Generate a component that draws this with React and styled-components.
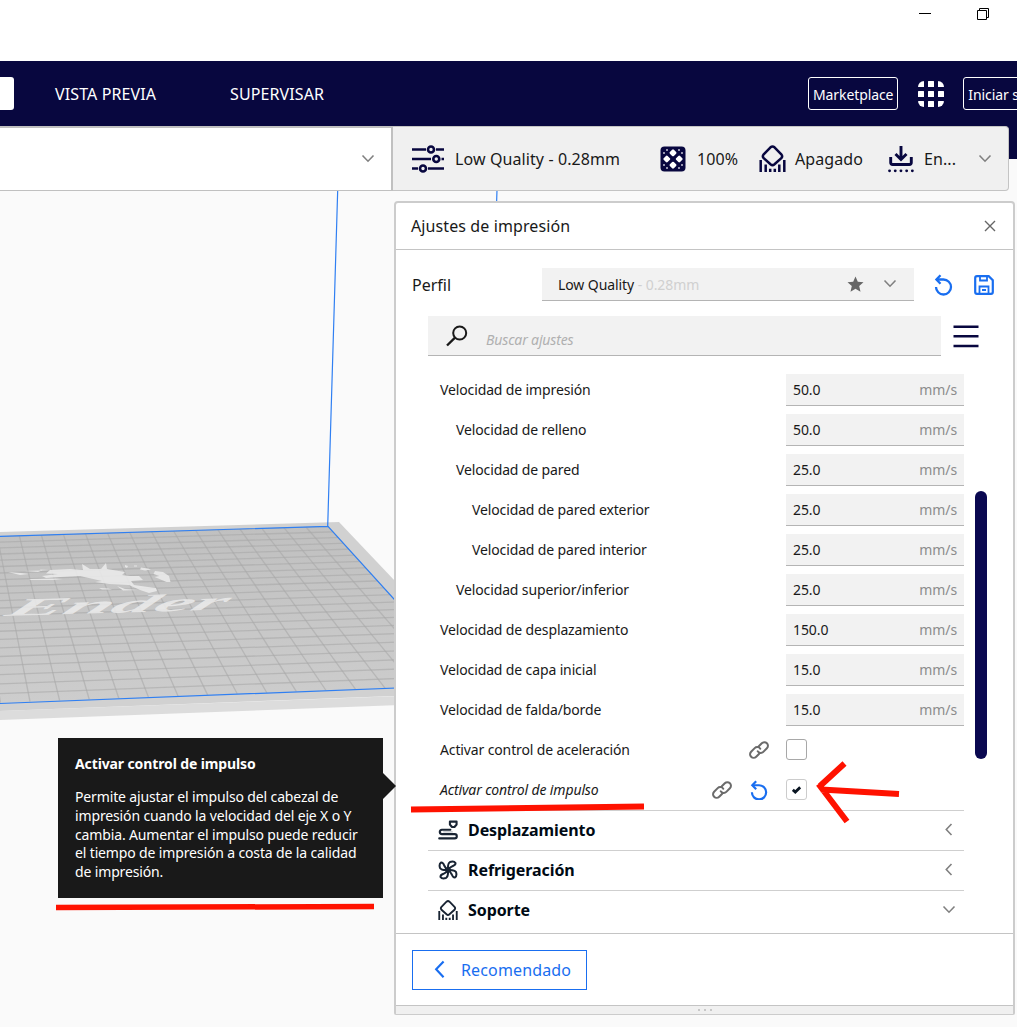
import React from "react";
import styled, { createGlobalStyle } from "styled-components";

const NAVY = "#08073f";
const BLUE = "#196ef0";

const speeds = [
  { label: "Velocidad de impresión", value: "50.0", depth: 0 },
  { label: "Velocidad de relleno", value: "50.0", depth: 1 },
  { label: "Velocidad de pared", value: "25.0", depth: 1 },
  { label: "Velocidad de pared exterior", value: "25.0", depth: 2 },
  { label: "Velocidad de pared interior", value: "25.0", depth: 2 },
  { label: "Velocidad superior/inferior", value: "25.0", depth: 1 },
  { label: "Velocidad de desplazamiento", value: "150.0", depth: 0 },
  { label: "Velocidad de capa inicial", value: "15.0", depth: 0 },
  { label: "Velocidad de falda/borde", value: "15.0", depth: 0 },
];

const GlobalStyle = createGlobalStyle`
  * {
    box-sizing: border-box;
  }
  body {
    margin: 0;
    overflow: hidden;
    background: #fafafa;
    color: #191919;
    font-family: "Noto Sans", sans-serif;
  }
  svg {
    display: block;
    flex-shrink: 0;
  }
`;

function Chevron({ dir = "down", size = 14, color = "#808080", width = 1.6 }) {
  const points = dir === "down" ? "1.5,3.5 7,9.2 12.5,3.5" : "9.5,1 4.3,6.500 9.5,12";
  return (
    <svg width={size} height={size} viewBox="0 0 14 14">
      <polyline points={points} fill="none" stroke={color} strokeWidth={width} />
    </svg>
  );
}

function SlidersIcon() {
  return (
    <svg width="34" height="28" viewBox="0 0 34 28" fill="none" stroke={NAVY} strokeWidth="2.6">
      <path d="M1 4.5h14M25 4.5h8M1 14h19M30.500 14h2.500M1 23.500h6M17 23.500h16" />
      <circle cx="20" cy="4.500" r="3" />
      <circle cx="25.300" cy="14" r="3" />
      <circle cx="12" cy="23.500" r="3" />
    </svg>
  );
}

function InfillIcon() {
  const holes = [[13, 6.8], [6.8, 13], [19.2, 13], [13, 19.2]];
  const dots = [[7, 4], [19, 4], [4, 7], [22, 7], [4, 19], [22, 19], [7, 22], [19, 22]];
  return (
    <svg width="26" height="26" viewBox="0 0 26 26">
      <rect x="0.500" y="0.500" width="25" height="25" rx="4" fill={NAVY} />
      {holes.map(([x, y]) => (
        <rect key={`${x}-${y}`} x={x - 2.800} y={y - 2.800} width="5.600" height="5.600" rx="1.200" fill="#fff" transform={`rotate(45 ${x} ${y})`} />
      ))}
      {dots.map(([x, y]) => (
        <circle key={`${x}-${y}`} cx={x} cy={y} r="1" fill="#c4c4d4" />
      ))}
    </svg>
  );
}

function SupportIcon({ size = 27, color = NAVY }) {
  return (
    <svg width={size} height={size} viewBox="0 0 27 27" fill="none" stroke={color} strokeWidth="2.5">
      <path d="M11.500 2.300 Q13.500 .6 15.500 2.300 L22.300 9.300 Q24 11.300 22.300 13.200 L15.500 19.300 Q13.500 21 11.500 19.300 L4.700 13.200 Q3 11.300 4.700 9.300 Z" />
      <path d="M1.700 15v12M25.300 15v12M6.700 19.500v7.500M20.300 19.500v7.500M11.200 23.800v3.200M15.800 23.800v3.200" />
    </svg>
  );
}

function AdhesionIcon() {
  return (
    <svg width="26" height="28" viewBox="0 0 26 28" fill="none" stroke={NAVY} strokeWidth="2.900">
      <path d="M13 1v13M7.500 9l5.500 5.500L18.500 9" />
      <path d="M2.700 12v5.500q0 2 2 2h16.600q2 0 2-2V12" />
      <path d="M1.500 25.800h24" strokeWidth="2.800" strokeDasharray="0.100 5.600" strokeLinecap="round" />
    </svg>
  );
}

function LinkIcon() {
  return (
    <svg width="20" height="20" viewBox="0 0 20 20" fill="none" stroke="#6b6b6b" strokeWidth="2" strokeLinecap="round">
      <path d="M9.800 6.200l3-3a3.600 3.600 0 0 1 5.100 5.100l-3.600 3.600a3.600 3.600 0 0 1-5.600-.6" />
      <path d="M10.200 13.800l-3 3a3.600 3.600 0 0 1-5.100-5.100l3.600-3.600a3.600 3.600 0 0 1 5.600.6" />
    </svg>
  );
}

function ResetIcon({ size = 20 }) {
  return (
    <svg width={size} height={size * 1.1} viewBox="0 0 20 22" fill="none" stroke={BLUE} strokeWidth="2.300">
      <path d="M2.500 5.500h7a7.500 7.500 0 1 1-7.500 7.500" />
      <path d="M6.500 1.200L2.400 5.500 6.500 9.800" />
    </svg>
  );
}

function SaveIcon() {
  return (
    <svg width="20" height="20" viewBox="0 0 20 20" fill="none" stroke={BLUE} strokeWidth="2.200">
      <path d="M3 1.200h11.700l4.100 4.100V17q0 1.800-1.800 1.800H3q-1.800 0-1.800-1.800V3Q1.200 1.200 3 1.200z" />
      <path d="M6 1v4.500h7V1M5.500 19v-7.500h9V19M8 15h4" strokeWidth="1.800" />
    </svg>
  );
}

function TravelIcon() {
  return (
    <svg width="20" height="20" viewBox="0 0 21 20" fill="none" stroke="#192433" strokeWidth="2.200" strokeLinejoin="round">
      <path d="M12.500 1.200h7v3L17.300 6.800h-2.600L12.500 4.200z" />
      <path d="M13 9.700H4.200a2.300 2.300 0 0 0-2.300 2.700q.3 1.900 2.300 1.900h13.300a2.200 2.200 0 0 1 0 4.500H1.300" strokeLinecap="round" />
      <path d="M5.500 12h10" strokeWidth="0.800" stroke="#9097a0" />
    </svg>
  );
}

function FanIcon() {
  return (
    <svg width="20" height="20" viewBox="0 0 20 20" fill="none" stroke="#192433" strokeWidth="2" strokeLinejoin="round">
      {[0, 90, 180, 270].map((angle) => (
        <path key={angle} transform={`rotate(${angle} 10 10)`} d="M10 10Q9.500 3.500 12 2Q16 .8 17.500 3Q17.800 5 14.500 6.200Q11.500 7.500 10 10z" />
      ))}
      <circle cx="10" cy="10" r="2.800" fill="#192433" stroke="none" />
    </svg>
  );
}

// Build plate seen from the front left; 10 mm grid
const columns = Array.from({ length: 24 }, (_, i) => i);
const rows = Array.from({ length: 22 }, (_, i) => i);

function BuildPlate() {
  return (
    <svg width="620" height="868" viewBox="0 159 620 868">
      <defs>
        <linearGradient id="bed" x1="0" y1="0" x2="0" y2="1">
          <stop offset="0" stopColor="#c0c0c0" />
          <stop offset="1" stopColor="#cdcdcd" />
        </linearGradient>
        <clipPath id="bedClip">
          <polygon points="0,536.3 328,526.3 472,685 0,703.5" />
        </clipPath>
      </defs>
      <polygon points="0,711 0,720 480,702 480,693" fill="#dcdcdc" />
      <polygon points="0,532 339,522 395,581 500,692 0,711" fill="#d1d1d1" />
      <polygon points="0,536.3 328,526.3 472,685 0,703.5" fill="url(#bed)" />
      <g clipPath="url(#bedClip)" stroke="#a8a8a8" strokeOpacity="0.6" strokeWidth="1.3">
        {columns.map((i) => (
          <line key={i} x1={328 - 22.05 * i} y1={526.3 + 0.67 * i} x2={474 - 29.6 * i} y2={685 + 1.1 * i} />
        ))}
        {rows.map((k) => {
          const y = 536.3 + (5.7 * k) / (1 - 0.0114 * k);
          const slope = 0.0305 + (0.008 * (y - 536)) / 167;
          return <line key={k} x1="0" y1={y} x2="480" y2={y - 480 * slope} />;
        })}
      </g>
      <g fill="#ececec" fillOpacity="0.85">
        <path d="M50 570l20-1 13 1-1-6 8 5 11 0 5-6 1 6 18 3-3 3 8 1 9 0 4 4-12 1 3 4 14 2 8 1 1 3-8 2-9-3-11-5-20-1-14-2 7-1-22-5-20 1-14 1-4-2 16-2-12-.5z" />
        <path d="M8 572l13 1 8 1-9 1zM24 571l18-.5-4 1.500zM29 579l26-.5 8 .5-10 1-22 0zM99 588l9 .5 4 1-10 0zM117 586l8 3 14 1-16 .5zM40 569.500l9 .5-8 .5z" />
        <path d="M125 565l3 1-1 2-2-1zM134 565.500l3 0 0 1-3 0zM141 567.500l7 1 3 1-6 1-5-1zM155 571l8 1 6 4 1.500 6-4 0-7-3-5-2 5-1-6-2z" />
        <text transform="matrix(1.85 -0.055 -0.9 1 3 616)" fontFamily="Liberation Serif, serif" fontStyle="italic" fontWeight="bold" fontSize="25" textLength="118" lengthAdjust="spacingAndGlyphs">
          Ender
        </text>
      </g>
      <g fill="none" stroke="#2f7ff2" strokeWidth="1.200">
        <path d="M0 536.300L328 526.300L472 685L0 703.500M327.700 526.300L337.700 190M497 190L496 220" />
      </g>
    </svg>
  );
}

export default function App() {
  return (
    <Window>
      <GlobalStyle />
      <TitleBar>
        <svg width="12" height="12" viewBox="0 0 12 12">
          <path d="M0 5.500h12" stroke="#000" />
        </svg>
        <svg width="12" height="12" viewBox="0 0 12 12" fill="none" stroke="#000">
          <path d="M.5 2.500h9v9h-9zM2.500 2.500v-2h9v9h-2" />
        </svg>
      </TitleBar>

      <NavBar>
        <ActiveStage />
        <Stage $width={175}>VISTA PREVIA</Stage>
        <Stage $width={578}>SUPERVISAR</Stage>
        <NavButton>Marketplace</NavButton>
        <AppsGrid width="26" height="26" viewBox="0 0 26 26">
          <clipPath id="apps">
            <rect width="26" height="26" rx="6" />
          </clipPath>
          <g fill="#fff" clipPath="url(#apps)">
            {[0, 10, 20].map((x) => [0, 10, 20].map((y) => (
              <rect key={`${x}-${y}`} x={x} y={y} width="6" height="6" rx="0.5" />
            )))}
          </g>
        </AppsGrid>
        <NavButton>Iniciar sesión</NavButton>
      </NavBar>

      <Workspace>
        <Scene>
          <BuildPlate />
        </Scene>
        <Foreground>
          <StageMenu>
            <MachineSelector>
              <Chevron />
            </MachineSelector>
            <PrintSetup>
              <SlidersIcon />
              <SetupText $width={215}>Low Quality - 0.28mm</SetupText>
              <InfillIcon />
              <SetupText $width={73} $gap={11}>100%</SetupText>
              <SupportIcon />
              <SetupText $width={102} $gap={9}>Apagado</SetupText>
              <AdhesionIcon />
              <SetupText $width={64}>En...</SetupText>
              <Chevron />
            </PrintSetup>
          </StageMenu>

          <Panel>
            <PanelHeader>
              Ajustes de impresión
              <svg width="12" height="12" viewBox="0 0 12 12" stroke="#666" strokeWidth="1.400">
                <path d="M1 1l10 10M11 1L1 11" />
              </svg>
            </PanelHeader>
            <ProfileRow>
              <ProfileLabel>Perfil</ProfileLabel>
              <ProfileSelect>
                <span>Low Quality <i>- 0.28mm</i></span>
                <svg width="18" height="18" viewBox="0 0 18 18">
                  <path d="M9.500 1.500l2.300 5.300 5.700.5-4.300 3.800 1.300 5.700-5-3-5 3 1.300-5.700L1.500 7.300l5.700-.5z" fill="#666" />
                </svg>
                <Chevron />
              </ProfileSelect>
              <ResetIcon />
              <SaveIcon />
            </ProfileRow>
            <SearchRow>
              <SearchBox>
                <svg width="22" height="22" viewBox="0 0 22 22" fill="none" stroke="#191919" strokeWidth="2">
                  <circle cx="13.700" cy="8" r="6.500" />
                  <path d="M9 12.700L1 20.500" strokeWidth="2.400" />
                </svg>
                <span>Buscar ajustes</span>
              </SearchBox>
              <svg width="26" height="24" viewBox="0 0 26 24" stroke={NAVY} strokeWidth="2.600">
                <path d="M.5 2.800h25M.5 12.300h25M.5 22h25" />
              </svg>
            </SearchRow>
            <Settings>
              <SettingList>
                {speeds.map((item) => (
                  <SettingRow key={item.label} $depth={item.depth}>
                    <SettingLabel>{item.label}</SettingLabel>
                    <ValueField>
                      {item.value}
                      <Unit>mm/s</Unit>
                    </ValueField>
                  </SettingRow>
                ))}
                <SettingRow $depth={0}>
                  <SettingLabel>Activar control de aceleración</SettingLabel>
                  <LinkIcon />
                  <CheckCell><Checkbox /></CheckCell>
                </SettingRow>
                <SettingRow $depth={0}>
                  <SettingLabel $changed>Activar control de impulso</SettingLabel>
                  <LinkIcon />
                  <ResetSlot><ResetIcon size={19} /></ResetSlot>
                  <CheckCell>
                    <Checkbox $light>
                      <svg width="9" height="8" viewBox="0 0 9 8" fill="none" stroke="#0a1522" strokeWidth="2.800">
                        <path d="M.8 3.800l2.500 2.200L8.200 1.300" />
                      </svg>
                    </Checkbox>
                  </CheckCell>
                </SettingRow>
                <Category>
                  <TravelIcon />
                  <span>Desplazamiento</span>
                  <Chevron dir="left" />
                </Category>
                <Category>
                  <FanIcon />
                  <span>Refrigeración</span>
                  <Chevron dir="left" />
                </Category>
                <Category>
                  <SupportIcon size={20} color="#192433" />
                  <span>Soporte</span>
                  <Chevron />
                </Category>
              </SettingList>
              <ScrollHandle />
            </Settings>
            <PanelFooter>
              <BackButton>
                <Chevron dir="left" size={20} color={BLUE} width={1.500} />
                Recomendado
              </BackButton>
            </PanelFooter>
            <ResizeStrip>
              <span /><span /><span />
            </ResizeStrip>
          </Panel>
        </Foreground>
      </Workspace>

      <Tooltip>
        <b>Activar control de impulso</b>
        <p>
          Permite ajustar el impulso del cabezal de impresión cuando la velocidad
          del eje X o Y cambia. Aumentar el impulso puede reducir el tiempo de
          impresión a costa de la calidad de impresión.
        </p>
      </Tooltip>

      <Markup width="1017" height="1027" viewBox="0 0 1017 1027">
        <path d="M411 809.500L644 806.500" />
        <path d="M56 907.500L374 906.500" strokeWidth="5.500" />
        <path d="M899 794L821 789.500M844.500 763.500L820 786M818.500 784L847 821.500" />
      </Markup>
    </Window>
  );
}

const Window = styled.div`
  position: relative;
  display: flex;
  flex-direction: column;
  width: 1017px;
  height: 1027px;
  overflow: hidden;
`;

const TitleBar = styled.header`
  display: flex;
  justify-content: flex-end;
  gap: 46px;
  height: 61px;
  padding: 8px 28px 0 0;
  background: #fff;
`;

const NavBar = styled.nav`
  display: flex;
  align-items: center;
  height: 65px;
  background: ${NAVY};
  color: #fff;
`;

const ActiveStage = styled.div`
  flex-shrink: 0;
  width: 14px;
  height: 33px;
  margin-right: 41px;
  border-radius: 0 3px 3px 0;
  background: #fff;
`;

const Stage = styled.div`
  flex-shrink: 0;
  width: ${(props) => props.$width}px;
  font-size: 16px;
  letter-spacing: 0.12px;
`;

const NavButton = styled.div`
  flex-shrink: 0;
  height: 33px;
  padding: 0 4px;
  border: 1px solid #fff;
  border-radius: 3px;
  font-size: 14px;
  letter-spacing: -0.1px;
  line-height: 33px;
  white-space: nowrap;
`;

const AppsGrid = styled.svg`
  margin: 0 19px 0 20px;
`;

// Scene and controls share one cell; the nav colour runs on behind the stage menu
const Workspace = styled.main`
  display: grid;
  height: 901px;
  background: linear-gradient(${NAVY} 33px, #fafafa 33px);
`;

const Scene = styled.div`
  grid-area: 1 / 1;
  padding-top: 33px;
`;

const Foreground = styled.div`
  grid-area: 1 / 1;
  z-index: 1;
`;

const StageMenu = styled.div`
  display: flex;
  width: 1009px;
  height: 65px;
`;

const MachineSelector = styled.div`
  display: flex;
  align-items: center;
  justify-content: flex-end;
  width: 393px;
  padding-right: 16px;
  border: solid #c0c0c0;
  border-width: 2px 2px 1px 0;
  background: #fff;
`;

const PrintSetup = styled.div`
  display: flex;
  align-items: center;
  flex: 1;
  padding-left: 18px;
  border: 1px solid #c4c4c4;
  border-left: 0;
  border-radius: 0 4px 4px 0;
  background: #f0f0f0;
`;

const SetupText = styled.div`
  flex-shrink: 0;
  width: ${(props) => props.$width}px;
  padding-left: ${(props) => props.$gap || 10}px;
  font-size: 16px;
  letter-spacing: 0.1px;
  white-space: nowrap;
`;

const Panel = styled.section`
  display: flex;
  flex-direction: column;
  width: 621px;
  height: 814px;
  margin: 10px 0 0 394px;
  border: 2px solid #ccc;
  border-bottom-width: 1px;
  border-radius: 4px 4px 2px 2px;
  background: #fff;
`;

const PanelHeader = styled.div`
  display: flex;
  align-items: center;
  justify-content: space-between;
  height: 47px;
  padding: 0 17px 0 15px;
  border-bottom: 1px solid #c4c4c4;
  font-size: 16px;
  letter-spacing: 0.1px;
`;

const ProfileRow = styled.div`
  display: flex;
  align-items: center;
  gap: 20px;
  height: 33px;
  margin: 18px 17px 0 16px;
`;

const ProfileLabel = styled.div`
  width: 110px;
  font-size: 16px;
`;

const ProfileSelect = styled.div`
  display: flex;
  align-items: center;
  gap: 19px;
  width: 372px;
  height: 33px;
  padding: 0 17px 0 16px;
  border-bottom: 1px solid #b4b4b4;
  background: #f2f2f2;
  font-size: 14px;
  letter-spacing: -0.08px;
  span {
    flex: 1;
  }
  i {
    color: #d0d0d0;
    font-style: normal;
  }
`;

const SearchRow = styled.div`
  display: flex;
  align-items: center;
  gap: 12px;
  margin: 15px 0 0 32px;
`;

const SearchBox = styled.div`
  display: flex;
  align-items: center;
  gap: 18px;
  width: 513px;
  height: 40px;
  padding-left: 18px;
  border-bottom: 1px solid #b4b4b4;
  background: #f2f2f2;
  color: #b0b0b0;
  font-size: 14px;
  font-style: italic;
  letter-spacing: -0.14px;
  span {
    padding-top: 7px;
  }
`;

const Settings = styled.div`
  display: flex;
  height: 577px;
  padding: 14px 0 0 32px;
  overflow: hidden;
`;

const SettingList = styled.div`
  width: 536px;
`;

const SettingRow = styled.div`
  display: flex;
  align-items: center;
  height: 40px;
  padding-left: ${(props) => 12 + props.$depth * 16}px;
`;

const SettingLabel = styled.div`
  flex: 1;
  padding-bottom: 2px;
  font-size: 14px;
  font-style: ${(props) => (props.$changed ? "italic" : "normal")};
  letter-spacing: -0.13px;
`;

const ValueField = styled.div`
  display: flex;
  align-items: center;
  justify-content: space-between;
  width: 178px;
  height: 32px;
  padding: 0 7px;
  border-bottom: 1px solid #b4b4b4;
  background: #f2f2f2;
  font-size: 14px;
  letter-spacing: -0.1px;
`;

const Unit = styled.span`
  color: #8c8c8c;
`;

const ResetSlot = styled.div`
  margin-left: 18px;
`;

const CheckCell = styled.div`
  width: 178px;
  margin-left: 17px;
  padding-bottom: 1px;
`;

const Checkbox = styled.div`
  display: flex;
  align-items: center;
  justify-content: center;
  width: 21px;
  height: 21px;
  border: 1px solid ${(props) => (props.$light ? "#cccccc" : "#a8a8a8")};
  border-radius: 3px;
`;

const Category = styled.div`
  display: flex;
  align-items: center;
  height: 40px;
  padding: 0 8px 2px 10px;
  border-top: 1px solid #cfcfcf;
  color: #000a14;
  font-size: 16px;
  font-weight: bold;
  letter-spacing: -0.08px;
  span {
    flex: 1;
    padding-left: 10px;
  }
`;

const ScrollHandle = styled.div`
  width: 12px;
  height: 268px;
  margin: 121px 0 0 11px;
  border-radius: 6px;
  background: #0a0850;
`;

const PanelFooter = styled.div`
  display: flex;
  height: 72px;
  padding: 16px;
  border-top: 1px solid #c4c4c4;
`;

const BackButton = styled.div`
  display: flex;
  align-items: center;
  gap: 11px;
  width: 175px;
  height: 40px;
  padding-left: 17px;
  border: 1px solid ${BLUE};
  color: ${BLUE};
  font-size: 16px;
  letter-spacing: 0.15px;
`;

const ResizeStrip = styled.div`
  display: flex;
  flex: 1;
  align-items: center;
  justify-content: center;
  gap: 4px;
  border-top: 1px solid #c4c4c4;
  background: #f0f0f0;
  span {
    width: 2px;
    height: 2px;
    background: #c8c8c8;
  }
`;

const Tooltip = styled.aside`
  position: absolute;
  z-index: 2;
  left: 58px;
  top: 738px;
  width: 325px;
  height: 160px;
  padding: 16px 17px;
  background: #191919;
  color: #fff;
  font-size: 14px;
  letter-spacing: -0.12px;
  line-height: 19px;
  p {
    margin: 15px 0 0;
    letter-spacing: -0.14px;
    line-height: 18.8px;
  }
  &::after {
    content: "";
    position: absolute;
    left: 100%;
    top: 35px;
    border: 13px solid transparent;
    border-right: 0;
    border-left-color: #191919;
  }
`;

const Markup = styled.svg`
  position: absolute;
  z-index: 3;
  left: 0;
  top: 0;
  fill: none;
  stroke: #ff1200;
  stroke-width: 6px;
`;
